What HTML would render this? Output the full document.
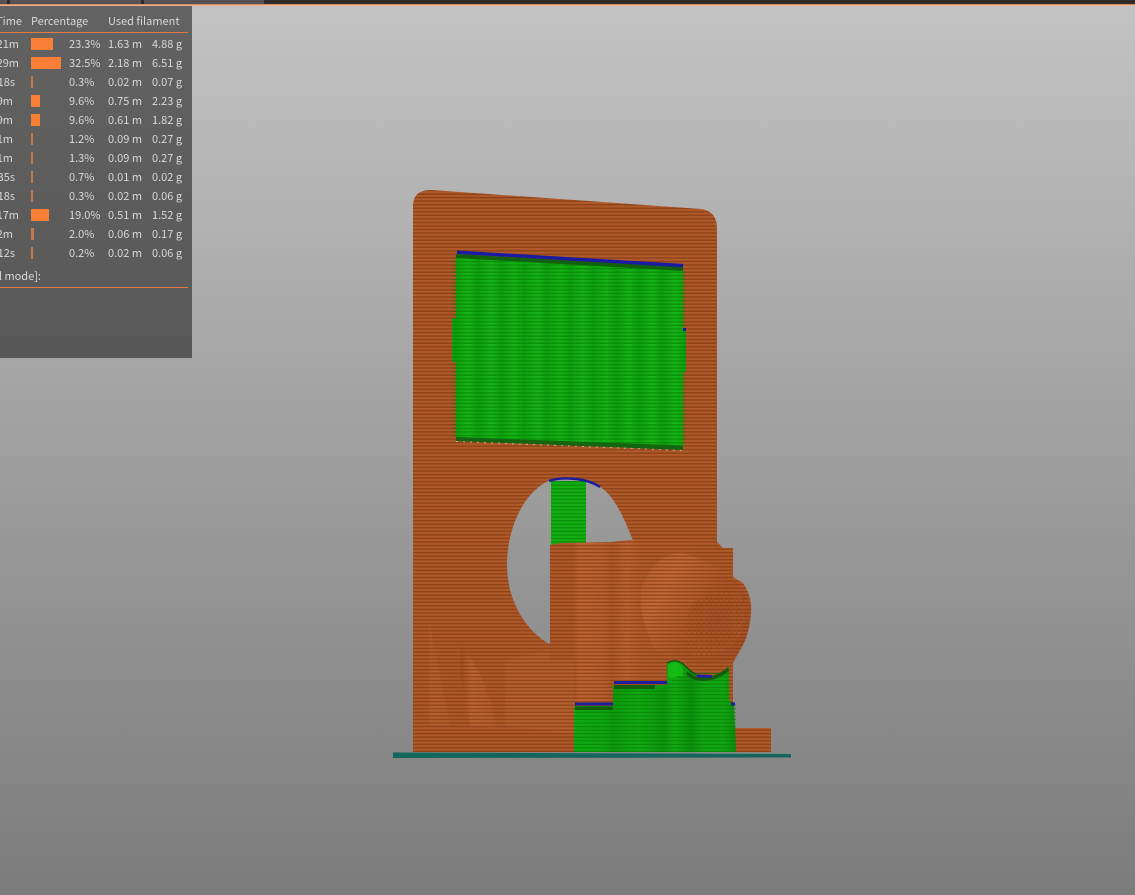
<!DOCTYPE html>
<html><head><meta charset="utf-8"><style>
html,body{margin:0;padding:0}
body{width:1135px;height:895px;overflow:hidden;position:relative;background:linear-gradient(#c3c3c3 0,#7c7c7c 100%);font-family:"Noto Sans CJK JP","Liberation Sans",sans-serif;font-size:11px;color:#d9d9d9}
#top{position:absolute;left:0;top:0;width:1135px;height:4px;background:#2f2b29}
#top i{position:absolute;top:0;height:4px;background:#565152}
#ol{position:absolute;left:0;top:4px;width:1135px;height:1px;background:#d98a5e}
#ol2{position:absolute;left:0;top:5px;width:1135px;height:1px;background:#e3b7a0}
#panel{position:absolute;left:0;top:6px;width:192px;height:352px;background:linear-gradient(#626262,#585858)}
.t{position:absolute;line-height:14px;white-space:nowrap}
.r{text-align:right}
.b{position:absolute;left:31px;height:12px;background:#f97f37}
.n{width:2px;background:#c27a4e}
.l{position:absolute;left:0;width:188px;height:1px;background:#e07a40}
svg{position:absolute;left:0;top:0}
</style></head><body>
<svg width="1135" height="895" viewBox="0 0 1135 895">
<defs>
<pattern id="ln" width="8" height="3.55" patternUnits="userSpaceOnUse"><rect width="8" height="1.5" y="1.6" fill="#7a3510" fill-opacity=".62"/></pattern>
<pattern id="lg" width="8" height="3.55" patternUnits="userSpaceOnUse"><rect width="8" height="1.2" y="1.8" fill="#057505" fill-opacity=".6"/></pattern>
<pattern id="br" width="5" height="7.1" patternUnits="userSpaceOnUse"><rect x="1" y="0" width="1" height="3.5" fill="#7a3510" fill-opacity=".35"/><rect x="3.5" y="3.55" width="1" height="3.5" fill="#7a3510" fill-opacity=".35"/></pattern>
<linearGradient id="gw" gradientUnits="userSpaceOnUse" x1="456" x2="479" y1="0" y2="0" spreadMethod="repeat">
<stop offset="0" stop-color="#0ea20e"/><stop offset=".55" stop-color="#14b414"/><stop offset="1" stop-color="#0d9e0d"/></linearGradient>
<linearGradient id="gs" gradientUnits="userSpaceOnUse" x1="574" x2="736" y1="0" y2="0">
<stop offset="0" stop-color="#11ac11"/><stop offset=".2" stop-color="#0fa40f"/><stop offset=".24" stop-color="#0d9a0d"/><stop offset=".4" stop-color="#11aa11"/><stop offset=".56" stop-color="#0d960d"/><stop offset=".62" stop-color="#13ae13"/><stop offset=".72" stop-color="#0c900c"/><stop offset=".8" stop-color="#11a611"/><stop offset=".92" stop-color="#11a611"/><stop offset="1" stop-color="#0b8e0b"/></linearGradient>
<linearGradient id="blk" gradientUnits="userSpaceOnUse" x1="550" x2="733" y1="0" y2="0">
<stop offset="0" stop-color="#b0592a"/><stop offset=".13" stop-color="#b05a2a"/><stop offset=".16" stop-color="#c06632"/><stop offset=".3" stop-color="#ba6130"/><stop offset=".34" stop-color="#b05a2a"/><stop offset=".42" stop-color="#c06632"/><stop offset=".5" stop-color="#b35c2c"/><stop offset="1" stop-color="#b05a2a"/></linearGradient>
<linearGradient id="cy" x1="0" y1="0" x2="1" y2=".6"><stop offset="0" stop-color="#bb6230"/><stop offset=".3" stop-color="#c46a36"/><stop offset=".7" stop-color="#ac5628"/><stop offset="1" stop-color="#a85226"/></linearGradient>
<radialGradient id="fc" cx=".55" cy=".4" r=".6"><stop offset="0" stop-color="#a75428"/><stop offset="1" stop-color="#b35c2c"/></radialGradient>
<linearGradient id="cone" x1="0" x2="1" y1="0" y2="0"><stop offset="0" stop-color="#a05026"/><stop offset=".3" stop-color="#c26a34"/><stop offset="1" stop-color="#b66030"/></linearGradient>
<clipPath id="bc"><path d="M550,545 L560,543 L612,542 L630,540 L717,542 L723,548 L733,548 L733,577 L743,583 C749,592 752,602 751,612 C750,628 746,642 740,650 L733,663 L733,752 L574,752 L574,660 L550,660 Z M735,728 L771,728 L771,752 L735,752 Z"/></clipPath>
</defs>

<!-- plate -->
<path fill-rule="evenodd" fill="#b05a2a" d="M413,206 Q413,190 431,190 L701,209 Q717,211 717,229 L717,752 L413,752 Z M456,254 L456,440 L683,449 L683,268 Z M548,481 C522,494 507,530 507,565 C507,600 525,630 549,644 L640,600 L640,560 C628,525 615,495 600,487 C585,479 565,476 548,481 Z"/>
<!-- lower left relief -->
<path fill="url(#cone)" opacity=".8" d="M461,645 C472,655 490,690 497,728 L470,726 L461,680 Z"/>
<path fill="#c06a35" opacity=".4" d="M429,620 L450,725 L429,725 Z M505,660 L548,650 L574,650 L574,735 L505,725 Z"/>
<!-- plate lines -->
<path fill-rule="evenodd" fill="url(#ln)" d="M413,206 Q413,190 431,190 L701,209 Q717,211 717,229 L717,752 L413,752 Z M456,254 L456,440 L683,449 L683,268 Z M548,481 C522,494 507,530 507,565 C507,600 525,630 549,644 L640,600 L640,560 C628,525 615,495 600,487 C585,479 565,476 548,481 Z"/>
<!-- green window -->
<path fill="url(#gw)" d="M456,254 L683,268 L683,449 L456,440 Z M452,318 L456,318 L456,362 L452,362 Z M683,330 L686,330 L686,372 L683,372 Z"/>
<path fill="url(#lg)" d="M452,258 L686,271 L686,446 L452,437 Z"/>
<path fill="#125f0e" d="M456,254 L683,267 L683,271 L456,258 Z"/>
<path fill="#14650f" d="M456,437 L683,445.5 L683,450 L456,441 Z"/>
<path fill="none" stroke="#1a1aa2" stroke-width="3.4" d="M457,252.2 L683,265.6"/>
<rect x="683" y="328" width="3" height="3" fill="#1c1ca0"/>
<path fill="none" stroke="#c8dcb8" stroke-width="1" stroke-dasharray="2 5" opacity=".7" d="M456,441.5 L683,450.5"/>
<!-- green column in hole -->
<rect x="551" y="481" width="35" height="66" fill="#12ae12"/>
<rect x="551" y="481" width="35" height="66" fill="url(#lg)"/>
<path fill="none" stroke="#1c1c9c" stroke-width="2.4" d="M549,481 C560,477 585,477 600,487"/>
<!-- block -->
<path fill="url(#blk)" d="M550,545 L560,543 L612,542 L630,540 L717,542 L723,548 L733,548 L733,577 L743,583 C749,592 752,602 751,612 C750,628 746,642 740,650 L733,663 L733,752 L574,752 L574,660 L550,660 Z"/>
<!-- cylinder -->
<path fill="url(#cy)" d="M641,590 C647,567 664,553 680,553 C700,556 718,568 733,580 C745,590 750,600 751,612 C750,630 745,645 733,660 L700,665 L655,650 C645,630 639,610 641,590 Z"/>
<path fill="url(#fc)" d="M690,607 C698,596 720,590 735,593 C746,598 746,620 740,635 C730,650 705,662 692,655 C684,642 684,620 690,607 Z"/>
<path fill="url(#br)" d="M690,607 C698,596 720,590 735,593 C746,598 746,620 740,635 C730,650 705,662 692,655 C684,642 684,620 690,607 Z"/>
<!-- small block -->
<rect x="735" y="728" width="36" height="24" fill="#b05a2a"/>
<!-- block lines -->
<rect x="545" y="535" width="230" height="220" fill="url(#ln)" clip-path="url(#bc)"/>
<!-- green stairs -->
<path fill="url(#gs)" d="M574,706 L613,706 L613,685 L667,685 L667,663 C672,660 678,660 683,664 C690,670 695,677 708,677 C716,677 723,670 729,667 L729,700 L734,704 L736,752 L574,752 Z"/>
<path fill="#16c816" opacity=".6" d="M668,665 C672,662 678,662 682,666 L684,676 L668,678 Z"/>
<path fill="url(#lg)" d="M574,708 L613,708 L613,688 L667,688 L667,683 L684,672 L729,672 L729,700 L736,704 L736,752 L574,752 Z"/>
<path fill="#145c0e" d="M575,706.5 L613,706.5 L613,710 L575,710 Z M614,685 L655,685 L655,689 L614,689 Z M687,671 C695,680 715,679 728,667 L729,671 C715,683 695,684 687,675 Z"/>
<path fill="none" stroke="#14570e" stroke-width="1.5" d="M667,663 C672,660 678,660 683,664 C688,668 692,674 700,676"/>
<path fill="none" stroke="#1f1f9c" stroke-width="3" d="M575,704 L613,704 M614,682.5 L667,682.5 M697,676 L712,676.5 M731,704 L735,704"/>
<!-- base -->
<path fill="#14665c" d="M393,752.5 L791,754 L791,757.5 L393,758 Z"/>
</svg>

<div id="top"><i style="left:0;width:7px"></i><i style="left:10px;width:131px"></i><i style="left:144px;width:120px"></i></div>
<div id="ol"></div><div id="ol2"></div>
<div id="panel"></div>

<span class="t r" style="right:1113px;top:14px">Time</span>
<span class="t" style="left:31px;top:14px">Percentage</span>
<span class="t" style="left:108px;top:14px">Used filament</span>
<div class="l" style="top:32px"></div>

<span class="t r" style="right:1116px;top:37px">21m</span><div class="b" style="top:38px;width:22px"></div><span class="t" style="left:69px;top:37px">23.3%</span><span class="t" style="left:108px;top:37px">1.63 m</span><span class="t" style="left:152px;top:37px">4.88 g</span>
<span class="t r" style="right:1116px;top:56px">29m</span><div class="b" style="top:57px;width:30px"></div><span class="t" style="left:69px;top:56px">32.5%</span><span class="t" style="left:108px;top:56px">2.18 m</span><span class="t" style="left:152px;top:56px">6.51 g</span>
<span class="t r" style="right:1120px;top:75px">18s</span><div class="b n" style="top:76px"></div><span class="t" style="left:69px;top:75px">0.3%</span><span class="t" style="left:108px;top:75px">0.02 m</span><span class="t" style="left:152px;top:75px">0.07 g</span>
<span class="t r" style="right:1122px;top:94px">9m</span><div class="b" style="top:95px;width:9px"></div><span class="t" style="left:69px;top:94px">9.6%</span><span class="t" style="left:108px;top:94px">0.75 m</span><span class="t" style="left:152px;top:94px">2.23 g</span>
<span class="t r" style="right:1122px;top:113px">9m</span><div class="b" style="top:114px;width:9px"></div><span class="t" style="left:69px;top:113px">9.6%</span><span class="t" style="left:108px;top:113px">0.61 m</span><span class="t" style="left:152px;top:113px">1.82 g</span>
<span class="t r" style="right:1122px;top:132px">1m</span><div class="b n" style="top:133px"></div><span class="t" style="left:69px;top:132px">1.2%</span><span class="t" style="left:108px;top:132px">0.09 m</span><span class="t" style="left:152px;top:132px">0.27 g</span>
<span class="t r" style="right:1122px;top:151px">1m</span><div class="b n" style="top:152px"></div><span class="t" style="left:69px;top:151px">1.3%</span><span class="t" style="left:108px;top:151px">0.09 m</span><span class="t" style="left:152px;top:151px">0.27 g</span>
<span class="t r" style="right:1120px;top:170px">35s</span><div class="b n" style="top:171px"></div><span class="t" style="left:69px;top:170px">0.7%</span><span class="t" style="left:108px;top:170px">0.01 m</span><span class="t" style="left:152px;top:170px">0.02 g</span>
<span class="t r" style="right:1120px;top:189px">18s</span><div class="b n" style="top:190px"></div><span class="t" style="left:69px;top:189px">0.3%</span><span class="t" style="left:108px;top:189px">0.02 m</span><span class="t" style="left:152px;top:189px">0.06 g</span>
<span class="t r" style="right:1116px;top:208px">17m</span><div class="b" style="top:209px;width:18px"></div><span class="t" style="left:69px;top:208px">19.0%</span><span class="t" style="left:108px;top:208px">0.51 m</span><span class="t" style="left:152px;top:208px">1.52 g</span>
<span class="t r" style="right:1122px;top:227px">2m</span><div class="b n" style="top:228px;width:3px"></div><span class="t" style="left:69px;top:227px">2.0%</span><span class="t" style="left:108px;top:227px">0.06 m</span><span class="t" style="left:152px;top:227px">0.17 g</span>
<span class="t r" style="right:1120px;top:246px">12s</span><div class="b n" style="top:247px"></div><span class="t" style="left:69px;top:246px">0.2%</span><span class="t" style="left:108px;top:246px">0.02 m</span><span class="t" style="left:152px;top:246px">0.06 g</span>

<span class="t r" style="right:1094px;top:269px">l mode]:</span>
<div class="l" style="top:287px"></div>
</body></html>
